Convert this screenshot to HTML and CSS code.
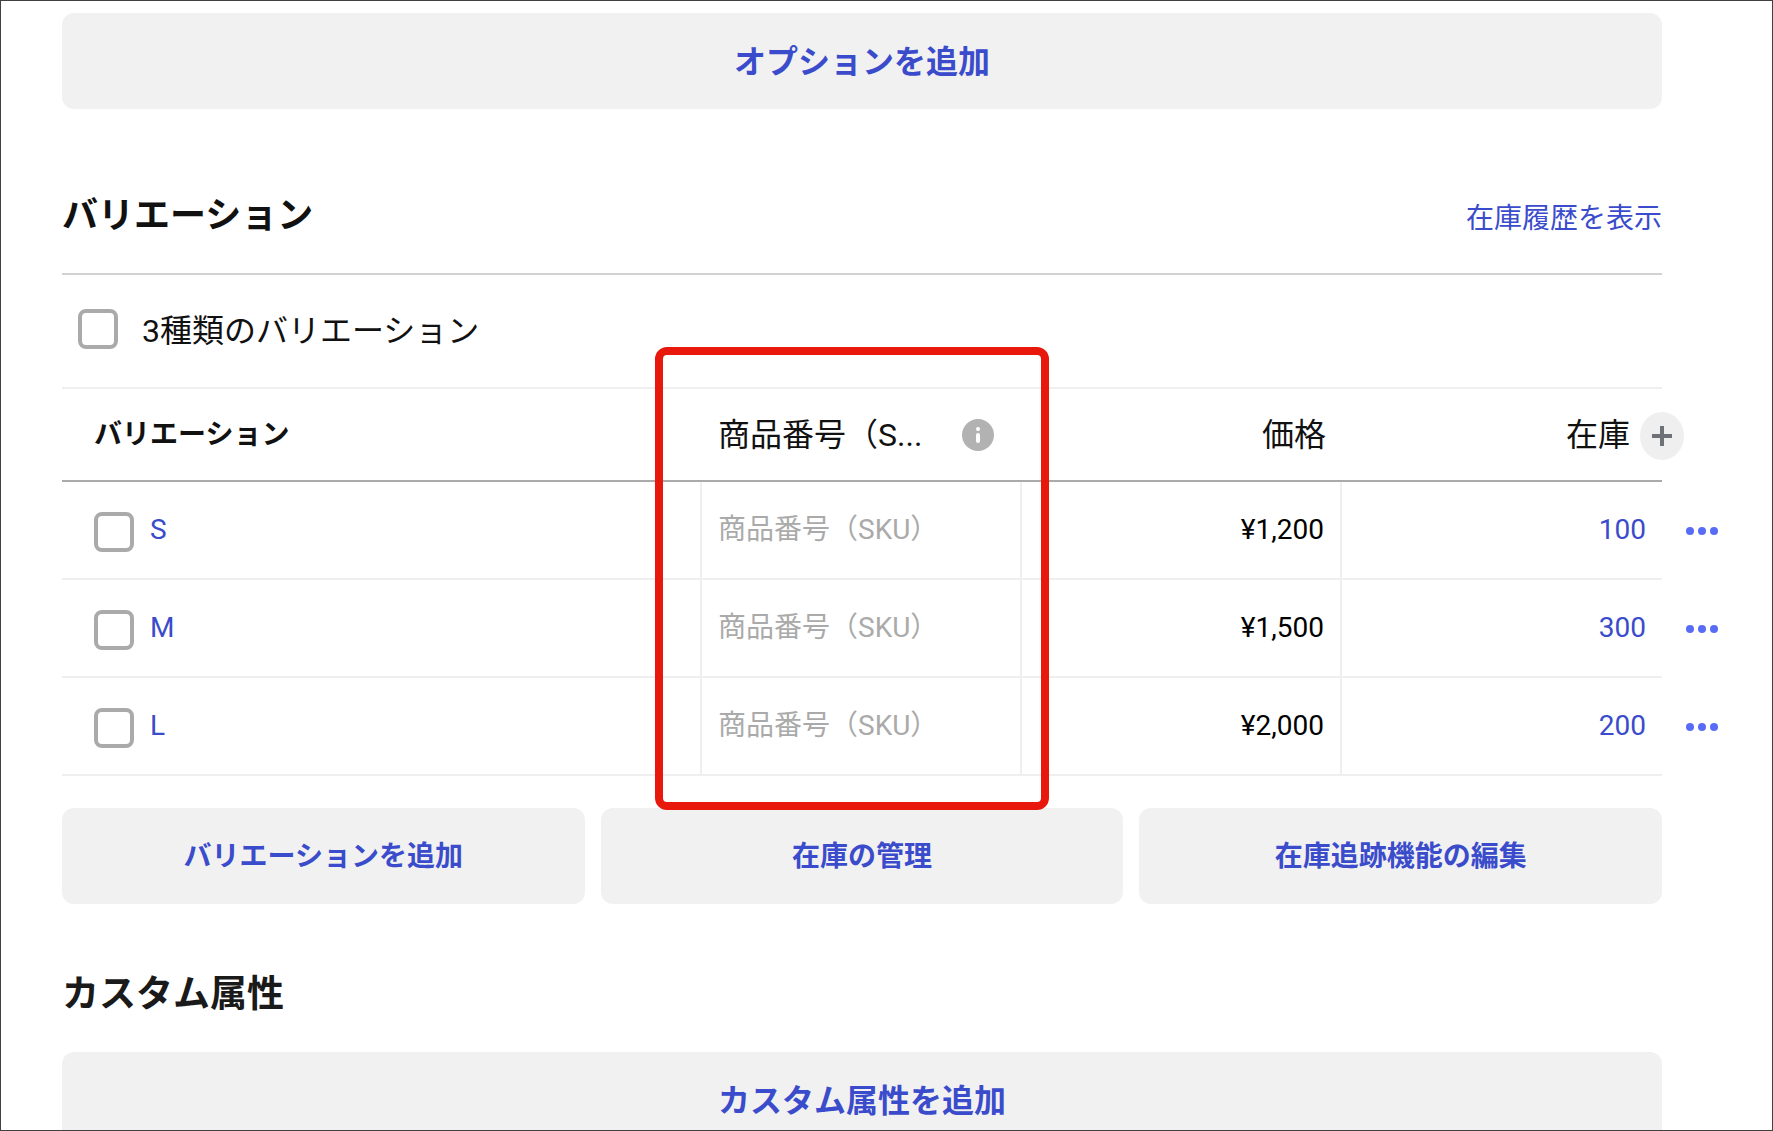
FILE: index.html
```html
<!DOCTYPE html>
<html lang="ja">
<head>
  <meta charset="UTF-8">
  <meta name="viewport" content="width=device-width, initial-scale=1.0">
  <title>バリエーション</title>
  <link rel="stylesheet" href="styles.css">
</head>
<body>
  <main class="screen">
    <button type="button" class="btn btn-large">オプションを追加</button>

    <section class="variations">
      <div class="section-head">
        <h2>バリエーション</h2>
        <a href="#history">在庫履歴を表示</a>
      </div>

      <div class="select-all">
        <input type="checkbox" id="all">
        <label for="all">3種類のバリエーション</label>
      </div>

      <div class="table-wrap">
        <table>
          <thead>
            <tr>
              <th class="col-name" scope="col">バリエーション</th>
              <th class="col-sku" scope="col">
                <div class="sku-head">
                  <span class="sku-title">商品番号（S...</span>
                  <svg class="info" viewBox="0 0 32 32" aria-hidden="true">
                    <circle cx="16" cy="16" r="16" fill="#b2b2b2"/>
                    <circle cx="16" cy="10" r="2" fill="#fff"/>
                    <rect x="14" y="14" width="4" height="10" rx="2" fill="#fff"/>
                  </svg>
                </div>
              </th>
              <th class="col-price" scope="col">価格</th>
              <th class="col-stock" scope="col">
                在庫
                <button type="button" class="add-col" aria-label="列を追加">
                  <svg viewBox="0 0 20 20"><path d="M10 0v20M0 10h20" stroke="#6e7175" stroke-width="4"/></svg>
                </button>
              </th>
            </tr>
          </thead>
          <tbody>
            <tr>
              <td><div class="name"><input type="checkbox" id="v-s"><label for="v-s">S</label></div></td>
              <td><input type="text" class="sku" aria-label="S 商品番号" placeholder="商品番号（SKU）"></td>
              <td class="price">¥1,200</td>
              <td class="stock">
                <a href="#stock-s">100</a>
                <button type="button" class="more" aria-label="S メニュー">
                  <svg viewBox="0 0 32 8"><circle cx="4" cy="4" r="4"/><circle cx="16" cy="4" r="4"/><circle cx="28" cy="4" r="4"/></svg>
                </button>
              </td>
            </tr>
            <tr>
              <td><div class="name"><input type="checkbox" id="v-m"><label for="v-m">M</label></div></td>
              <td><input type="text" class="sku" aria-label="M 商品番号" placeholder="商品番号（SKU）"></td>
              <td class="price">¥1,500</td>
              <td class="stock">
                <a href="#stock-m">300</a>
                <button type="button" class="more" aria-label="M メニュー">
                  <svg viewBox="0 0 32 8"><circle cx="4" cy="4" r="4"/><circle cx="16" cy="4" r="4"/><circle cx="28" cy="4" r="4"/></svg>
                </button>
              </td>
            </tr>
            <tr>
              <td><div class="name"><input type="checkbox" id="v-l"><label for="v-l">L</label></div></td>
              <td><input type="text" class="sku" aria-label="L 商品番号" placeholder="商品番号（SKU）"></td>
              <td class="price">¥2,000</td>
              <td class="stock">
                <a href="#stock-l">200</a>
                <button type="button" class="more" aria-label="L メニュー">
                  <svg viewBox="0 0 32 8"><circle cx="4" cy="4" r="4"/><circle cx="16" cy="4" r="4"/><circle cx="28" cy="4" r="4"/></svg>
                </button>
              </td>
            </tr>
          </tbody>
        </table>
        <div class="highlight"></div>
      </div>

      <div class="actions">
        <button type="button" class="btn">バリエーションを追加</button>
        <button type="button" class="btn">在庫の管理</button>
        <button type="button" class="btn">在庫追跡機能の編集</button>
      </div>
    </section>

    <section class="custom">
      <h2>カスタム属性</h2>
      <button type="button" class="btn btn-large">カスタム属性を追加</button>
    </section>
  </main>
</body>
</html>
```
FILE: styles.css
```css
* {
  box-sizing: border-box;
}

body {
  margin: 0;
  font-family: Roboto, "Noto Sans CJK JP", sans-serif;
  font-size: 28px;
  line-height: 40px;
  color: #111;
  background: #fff;
}

.screen {
  height: 100vh;
  overflow: hidden;
  padding: 12px 110px 0 61px;
  border: 1px solid #414141;
}

a,
.name label {
  color: #3a4ccb;
  text-decoration: none;
}

button,
input {
  font: inherit;
}

/* buttons */
.btn {
  display: block;
  width: 100%;
  height: 96px;
  padding: 2px 0 0;
  border: none;
  border-radius: 12px;
  background: #f1f1f1;
  color: #3a4ccb;
  font-weight: 600;
  cursor: pointer;
}

.btn-large {
  font-size: 32px;
}

/* headings */
h2 {
  margin: 0;
  font-size: 36px;
  line-height: 56px;
  font-weight: 600;
}

.section-head {
  display: flex;
  justify-content: space-between;
  align-items: baseline;
  margin-top: 79px;
  padding-bottom: 29px;
  border-bottom: 2px solid #d2d2d2;
}

/* checkboxes */
input[type="checkbox"] {
  appearance: none;
  flex: none;
  width: 40px;
  height: 40px;
  margin: 0;
  border: 4px solid #aaa;
  border-radius: 8px;
  background: #fff;
}

.select-all {
  display: flex;
  align-items: center;
  gap: 24px;
  height: 112px;
  padding: 0 16px;
  font-size: 32px;
}

.select-all input[type="checkbox"] {
  margin-bottom: 4px;
}

/* table */
.table-wrap {
  position: relative;
}

table {
  width: 100%;
  table-layout: fixed;
  border-collapse: separate;
  border-spacing: 0;
}

th {
  height: 95px;
  padding: 0 16px;
  border-top: 2px solid #efefef;
  border-bottom: 2px solid #aaa;
  font-size: 32px;
  font-weight: 400;
  text-align: right;
}

.col-name {
  width: 40%;
  padding-left: 32px;
  font-size: 28px;
  font-weight: 600;
  text-align: left;
}

.col-stock {
  position: relative;
  padding-right: 32px;
}

.sku-head {
  display: flex;
  align-items: center;
  gap: 24px;
  padding-right: 12px;
}

.sku-title {
  flex: 1;
  white-space: nowrap;
  text-align: left;
}

.info {
  flex: none;
  width: 32px;
  height: 32px;
}

.add-col {
  position: absolute;
  top: 23px;
  right: -22px;
  display: flex;
  align-items: center;
  justify-content: center;
  width: 44px;
  height: 48px;
  padding: 0;
  border: none;
  border-radius: 50%;
  background: #efefef;
}

.add-col svg {
  width: 20px;
  height: 20px;
}

td {
  height: 98px;
  padding: 0 16px;
  border-right: 2px solid #efefef;
  border-bottom: 2px solid #efefef;
}

td:last-child {
  border-right: none;
}

.name {
  display: flex;
  align-items: center;
  gap: 16px;
  padding: 0 0 0 16px;
}

.name input[type="checkbox"] {
  margin-top: 4px;
}

.sku {
  display: block;
  width: 100%;
  padding: 0;
  border: none;
  outline: none;
  background: none;
}

.sku::placeholder {
  color: #aaa;
  opacity: 1;
}

.price,
.stock {
  text-align: right;
}

.price {
  color: #000;
}

.stock {
  position: relative;
}

.more {
  position: absolute;
  top: 45px;
  right: -56px;
  padding: 0;
  border: none;
  background: none;
}

.more svg {
  display: block;
  width: 32px;
  height: 8px;
  fill: #586cf5;
}

/* red frame around the SKU column */
.highlight {
  position: absolute;
  top: -40px;
  bottom: -34px;
  left: calc(40% - 47px);
  width: calc(20% + 74px);
  border: 8px solid #e8190c;
  border-radius: 12px;
  pointer-events: none;
}

.actions {
  display: grid;
  grid-template-columns: repeat(3, 1fr);
  gap: 16px;
  margin-top: 32px;
}

.custom {
  margin-top: 63px;
}

.custom h2 {
  margin-bottom: 29px;
  font-size: 37px;
  color: #1a1a1a;
}
```
